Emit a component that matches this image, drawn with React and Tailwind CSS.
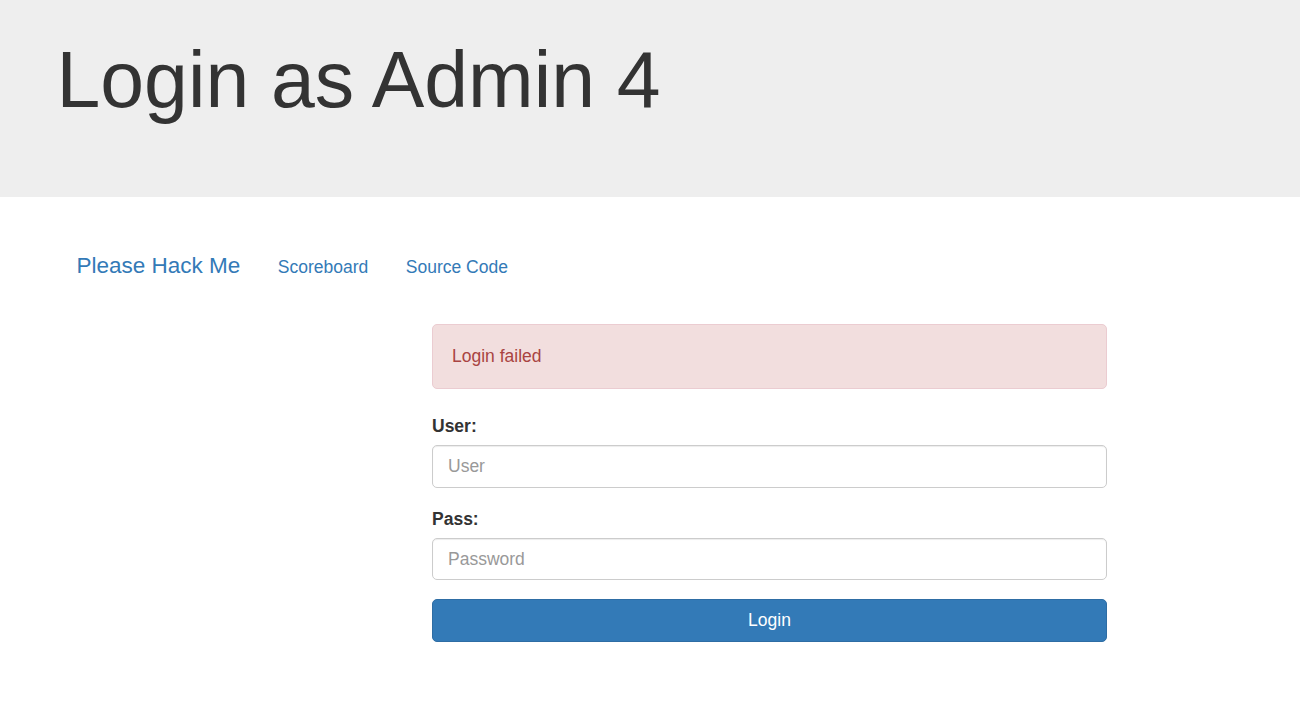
import React from "react";

export default function App() {
  return (
    <div
      className="min-h-[716px] bg-white text-[#333] text-[17.5px] leading-[25px]"
      style={{ fontFamily: '"Liberation Sans", Arial, Helvetica, sans-serif' }}
    >
      <div className="h-[197px] bg-[#eeeeee] pt-[37px] pl-[56.5px]">
        <h1 className="text-[78.75px] leading-[1.1] font-normal text-[#333] m-0">
          Login as Admin 4
        </h1>
      </div>

      <nav className="flex items-baseline pt-[56px] pl-[57.75px]">
        <a className="px-[18.75px] text-[22.5px] leading-[25px] text-[#337ab7]">
          Please Hack Me
        </a>
        <a className="px-[18.75px] text-[17.5px] leading-[25px] text-[#337ab7]">
          Scoreboard
        </a>
        <a className="px-[18.75px] text-[17.5px] leading-[25px] text-[#337ab7]">
          Source Code
        </a>
      </nav>

      <div className="ml-[432px] w-[675px] mt-[44px]">
        <div className="border border-[#ebccd1] bg-[#f2dede] text-[#a94442] rounded-[5px] pt-[18.5px] pb-[19.5px] pl-[19px] mb-[25px]">
          Login failed
        </div>

        <div className="mb-[18.75px]">
          <label className="block font-bold mb-[6.25px]">User:</label>
          <input
            type="text"
            placeholder="User"
            className="block w-full h-[42.5px] px-[15px] border border-[#ccc] rounded-[5px] bg-white text-[17.5px] text-[#555] placeholder:text-[#999] shadow-[inset_0_1px_1px_rgba(0,0,0,0.075)] outline-none"
          />
        </div>

        <div className="mb-[18.75px]">
          <label className="block font-bold mb-[6.25px]">Pass:</label>
          <input
            type="password"
            placeholder="Password"
            className="block w-full h-[42.5px] px-[15px] border border-[#ccc] rounded-[5px] bg-white text-[17.5px] text-[#555] placeholder:text-[#999] shadow-[inset_0_1px_1px_rgba(0,0,0,0.075)] outline-none"
          />
        </div>

        <button className="block w-full h-[42.5px] bg-[#337ab7] border border-[#2e6da4] rounded-[5px] text-white text-[17.5px] leading-[25px]">
          Login
        </button>
      </div>
    </div>
  );
}
